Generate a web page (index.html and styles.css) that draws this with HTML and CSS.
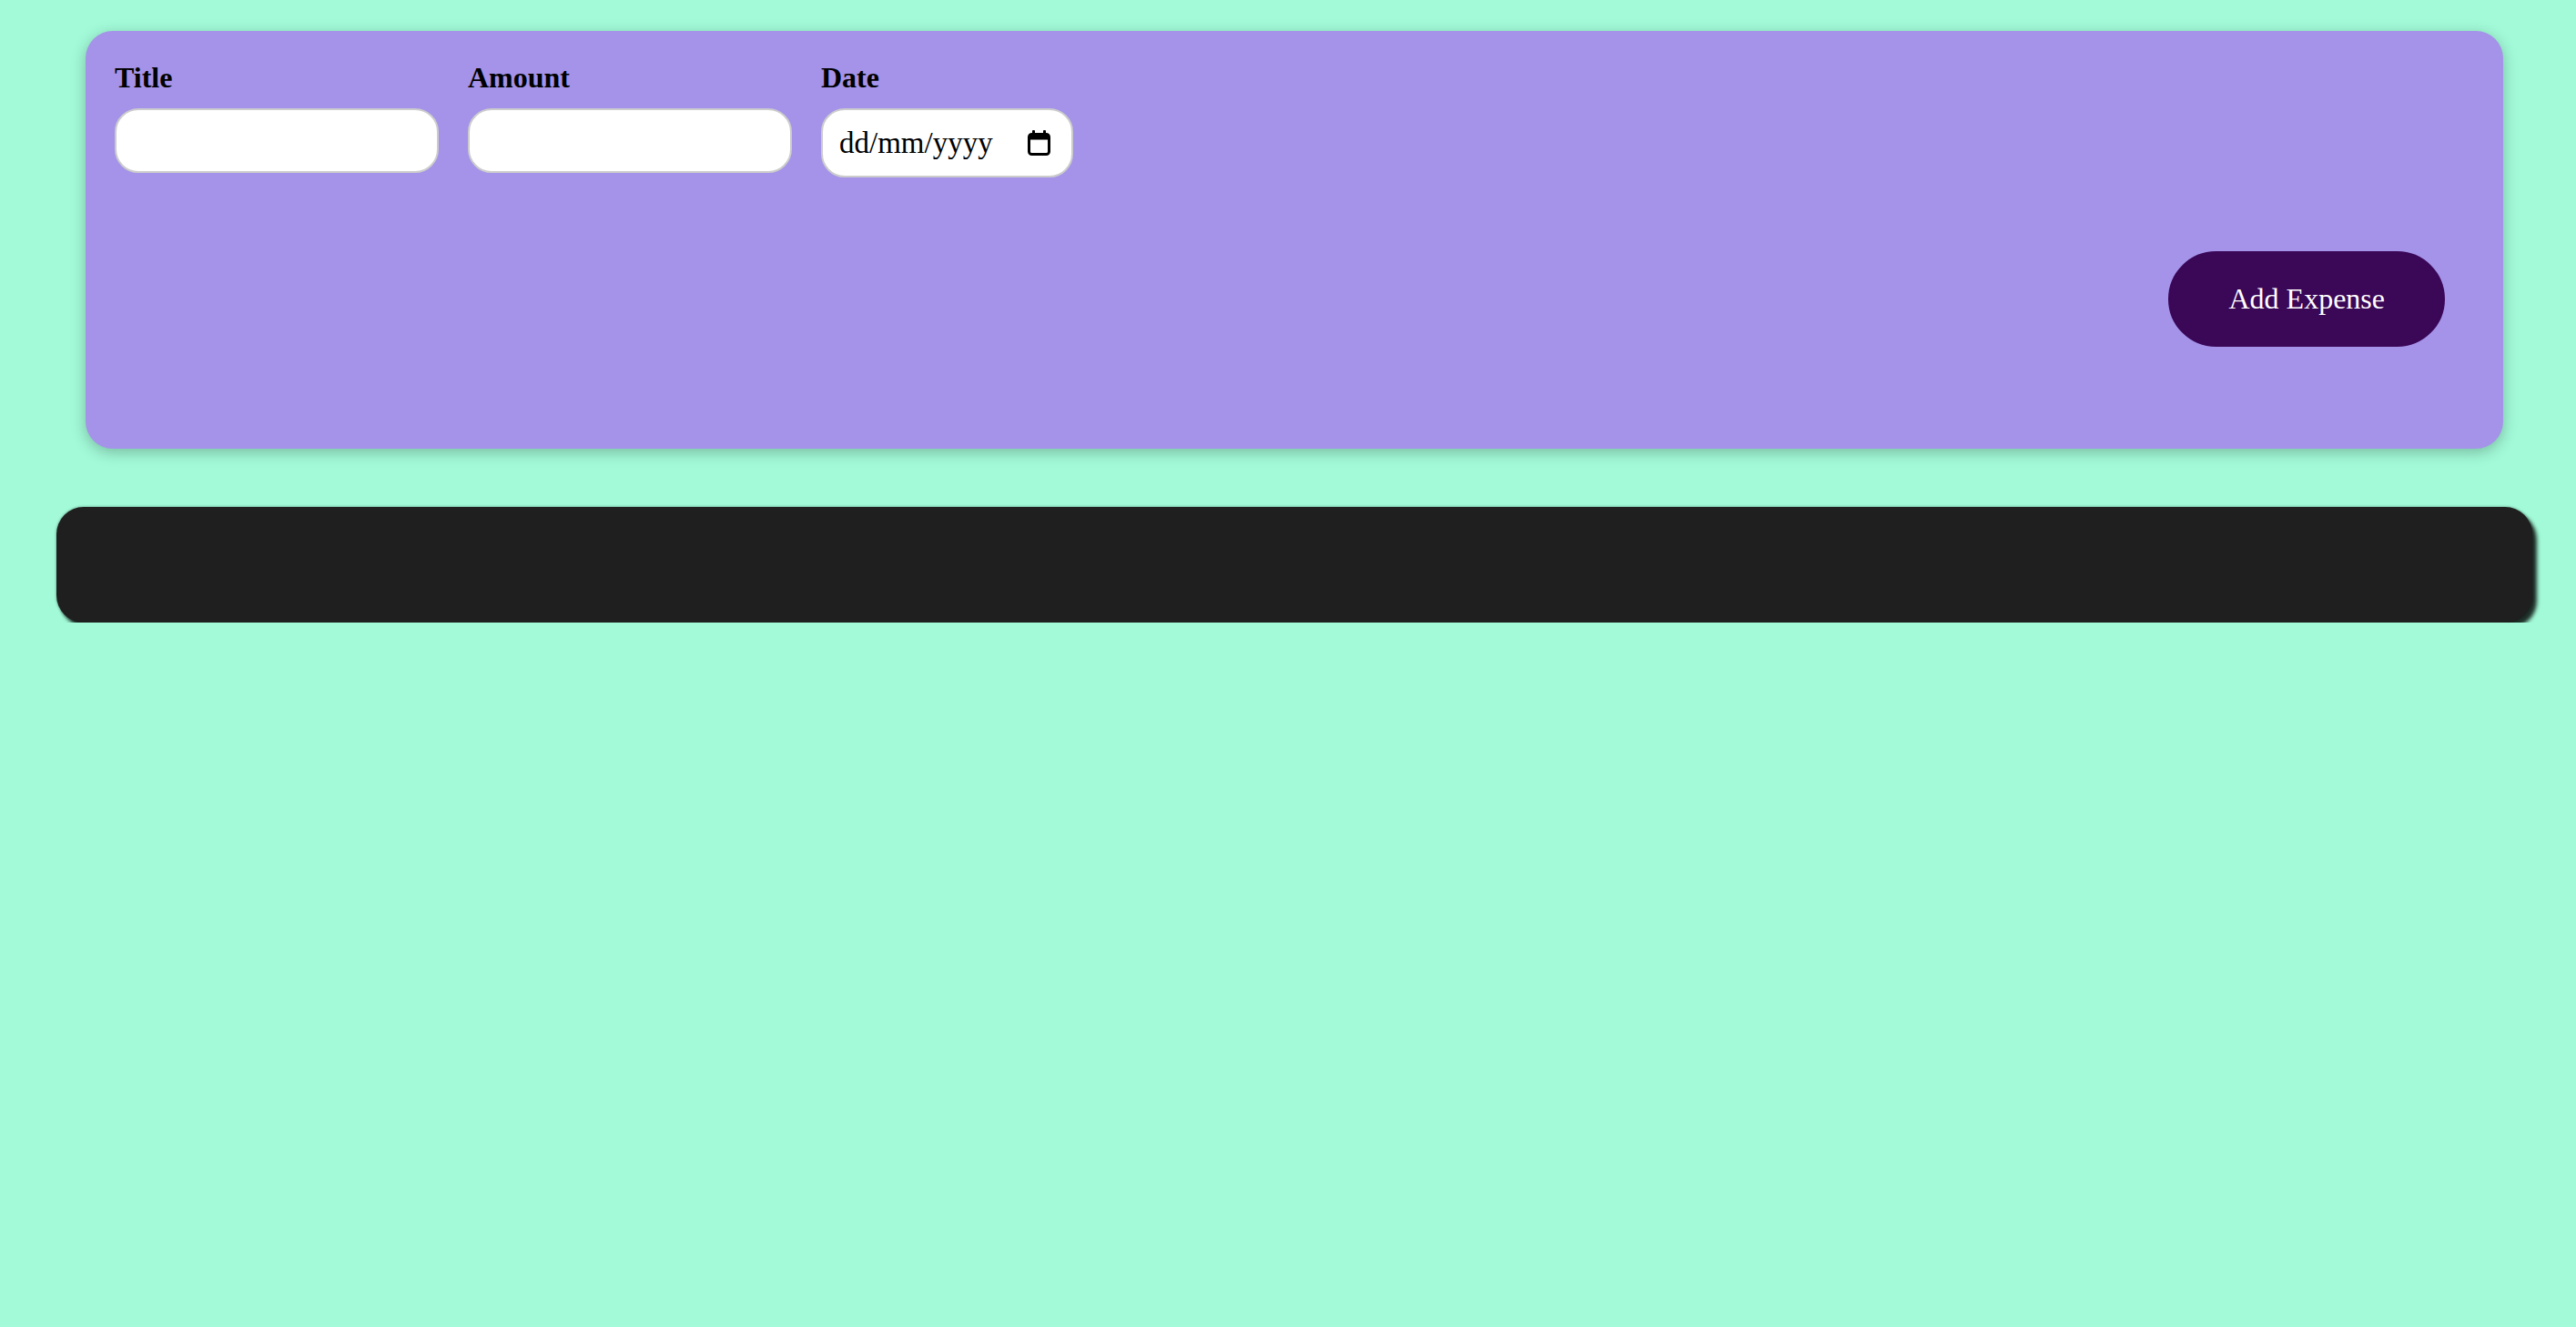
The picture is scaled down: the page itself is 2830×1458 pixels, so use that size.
FILE: index.html
```html
<!DOCTYPE html>
<html lang="en-GB">
<head>
<meta charset="utf-8">
<title>Expenses</title>
<link rel="stylesheet" href="styles.css">
</head>
<body>
<div class="app">
  <form class="new-expense">
    <div class="controls">
      <div class="control">
        <label class="control-label" for="title">Title</label>
        <input class="field field-text" id="title" type="text">
      </div>
      <div class="control">
        <label class="control-label" for="amount">Amount</label>
        <input class="field field-text" id="amount" type="number">
      </div>
      <div class="control">
        <label class="control-label" for="date">Date</label>
        <div class="field date-field">
          <input class="date-input" id="date" type="text" placeholder="dd/mm/yyyy">
          <svg class="date-icon" width="25" height="28" viewBox="0 0 25 28" aria-hidden="true">
            <rect x="5" y="0" width="3" height="6" rx="1" fill="#000"/>
            <rect x="17" y="0" width="3" height="6" rx="1" fill="#000"/>
            <rect x="1.5" y="4.5" width="22" height="22" rx="3" fill="none" stroke="#000" stroke-width="3"/>
            <rect x="1.5" y="4.5" width="22" height="6" fill="#000"/>
          </svg>
        </div>
      </div>
    </div>
    <div class="actions">
      <button class="add-btn" type="button">Add Expense</button>
    </div>
  </form>
  <div class="expenses"></div>
</div>
</body>
</html>
```
FILE: styles.css
```css
html, body {
  margin: 0;
  padding: 0;
  background: #a2fad8;
  font-family: "Liberation Serif", "Times New Roman", serif;
}

.app {
  width: 2720px;
  padding: 34px 0 0 62px;
}

.new-expense {
  margin: 0 32px;
  padding: 33px 32px 32px;
  background: #a493e9;
  border-radius: 30px;
  box-shadow: 0 4px 16px rgba(0, 0, 0, 0.25);
}

.controls {
  display: flex;
  gap: 32px;
  align-items: flex-start;
}

.control {
  display: flex;
  flex-direction: column;
}

.control-label {
  font-size: 32px;
  font-weight: bold;
  color: #000;
  margin-bottom: 15px;
  line-height: 37px;
}

.field {
  box-sizing: border-box;
  font-family: "Liberation Serif", "Times New Roman", serif;
  font-size: 33px;
  color: #000;
  background: #fff;
  border: 2px solid #cccccc;
  border-radius: 26px;
  padding: 0 18px;
  outline: none;
}

.field-text {
  width: 356px;
  height: 71px;
}

.field-text::-webkit-outer-spin-button,
.field-text::-webkit-inner-spin-button {
  -webkit-appearance: none;
  margin: 0;
}

.date-field {
  width: 277px;
  height: 76px;
  padding: 0 23px 0 18px;
  display: flex;
  align-items: center;
  gap: 8px;
}

.date-input {
  flex: 1;
  min-width: 0;
  border: none;
  outline: none;
  background: transparent;
  padding: 0;
  margin: 0;
  font-family: inherit;
  font-size: 33px;
  color: #000;
}

.date-input::placeholder {
  color: #000;
  opacity: 1;
}

.date-icon {
  flex: none;
  display: block;
}

.actions {
  display: flex;
  justify-content: flex-end;
  margin: 81px 32px 80px 0;
}

.add-btn {
  font-family: "Liberation Serif", "Times New Roman", serif;
  font-size: 32px;
  line-height: 37px;
  color: #fff;
  background: #3b0757;
  border: 2px solid #3b0757;
  border-radius: 60px;
  padding: 32px 64px;
  cursor: pointer;
}

.expenses {
  margin-top: 64px;
  height: 127px;
  background: #1f1f1f;
  border-radius: 30px;
  box-shadow: 5px 6px 4px rgba(0, 0, 0, 0.82), 0 0 3px rgba(0, 0, 0, 0.45);
}
```
